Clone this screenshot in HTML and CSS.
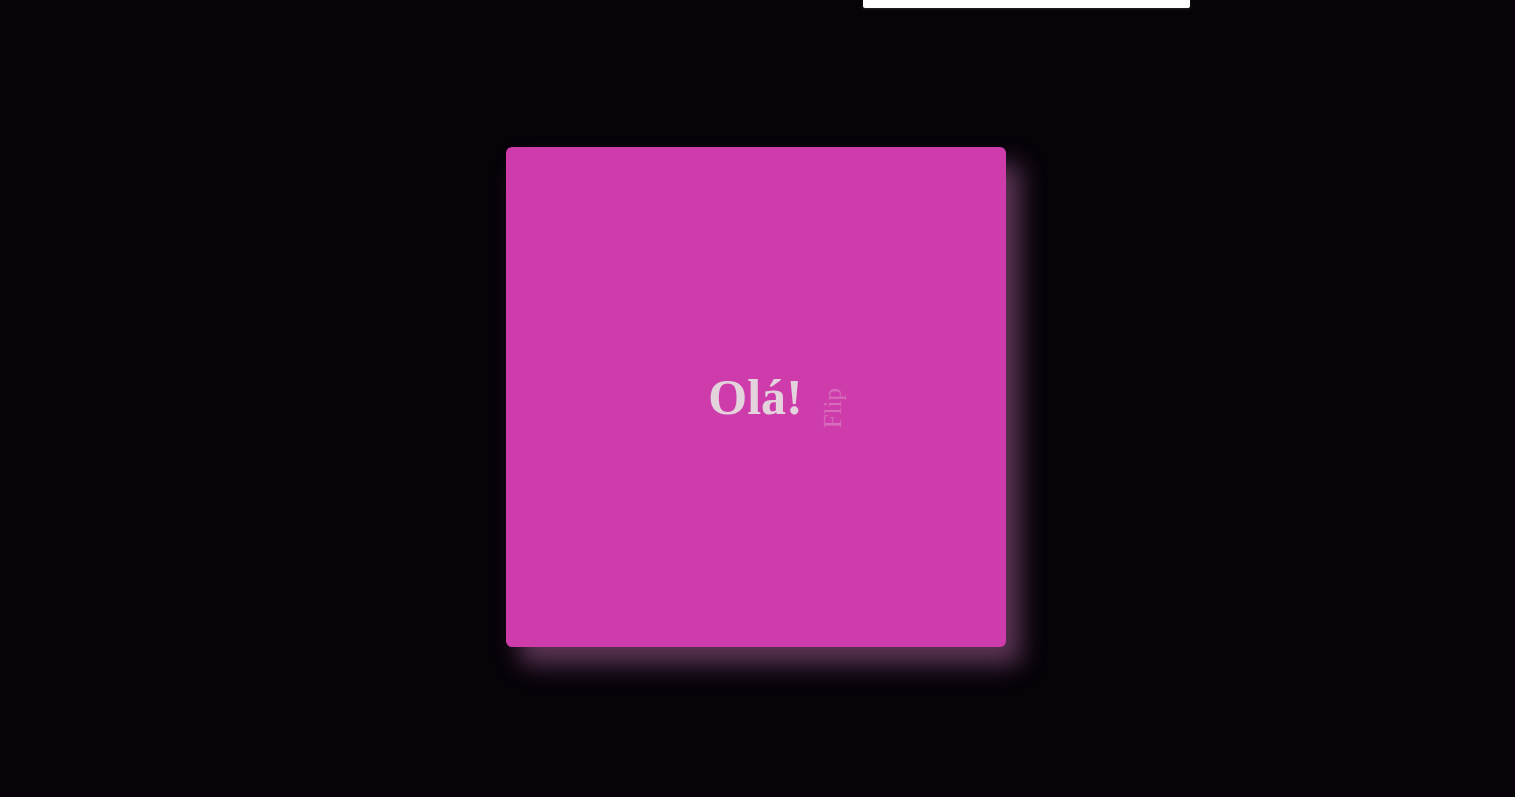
FILE: index.html
```html
<!DOCTYPE html>
<html>
<head>
<meta charset="utf-8">
<link rel="stylesheet" href="styles.css">
</head>
<body>
<div class="topbar"></div>
<main class="stage">
  <div class="card">
    <span class="greet">Olá!</span>
    <span class="flip">Flip</span>
  </div>
</main>
</body>
</html>
```
FILE: styles.css
```css
html, body {
  margin: 0;
  padding: 0;
  height: 100%;
}
body {
  background: #070309;
  overflow: hidden;
  position: relative;
  font-family: "Liberation Serif", serif;
}
.topbar {
  position: absolute;
  top: 0;
  left: 863px;
  width: 327px;
  height: 8px;
  background: #ffffff;
  border-radius: 0 0 2px 2px;
  box-shadow: 0 1px 3px rgba(255,255,255,0.15);
}
.stage {
  height: 100%;
  display: flex;
  justify-content: center;
  padding-top: 147px;
  box-sizing: border-box;
  padding-right: 3px;
}
.card {
  width: 500px;
  height: 500px;
  background: #cd3caa;
  border-radius: 6px;
  box-shadow: 14px 17px 24px rgba(225, 130, 205, 0.4);
  display: flex;
  align-items: center;
  justify-content: center;
  gap: 17px;
  padding-left: 41px;
  box-sizing: border-box;
}
.greet {
  font-weight: bold;
  font-size: 50px;
  color: #e3d3dd;
  line-height: 1;
}
.flip {
  writing-mode: vertical-rl;
  transform: rotate(180deg);
  font-size: 25px;
  color: rgba(232, 200, 222, 0.35);
  line-height: 1;
  margin-top: 22px;
}
```
